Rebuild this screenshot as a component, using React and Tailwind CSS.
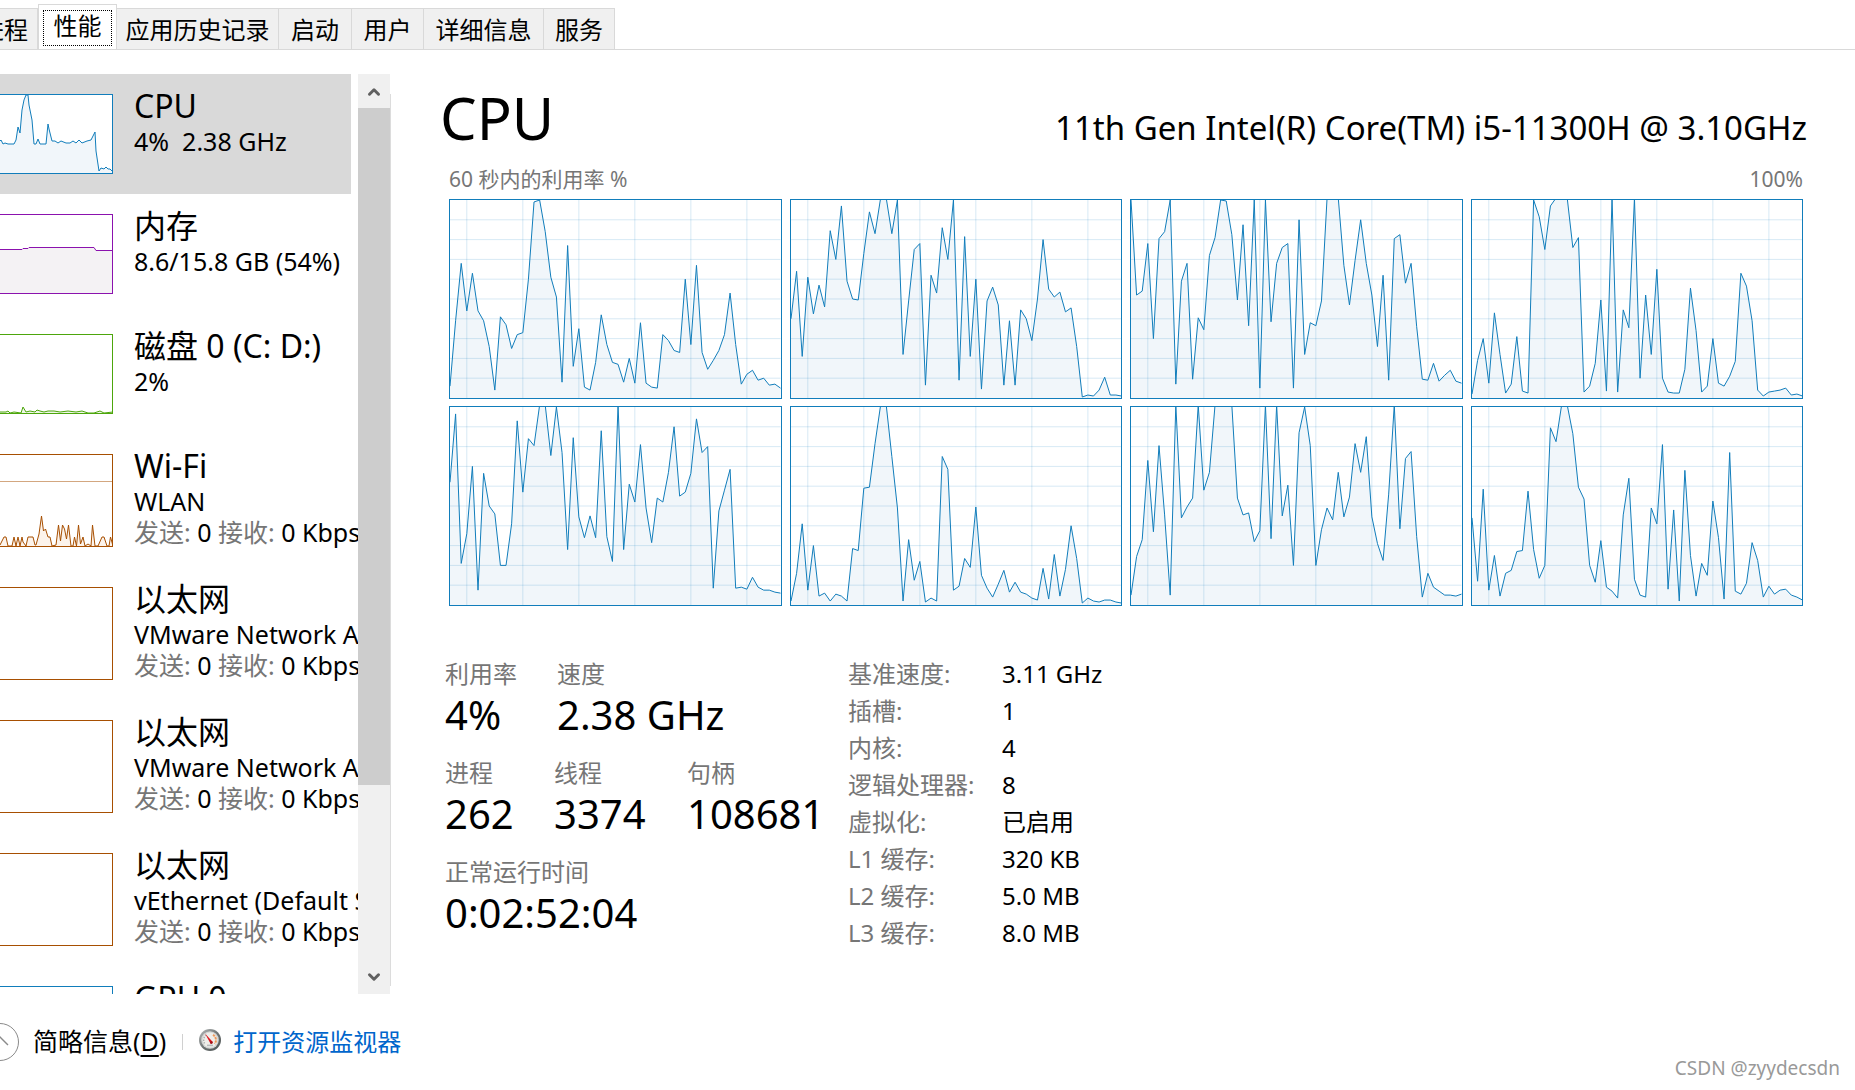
import { ChevronDown, ChevronUp } from 'lucide-react'

const TABS = [
  { label: '进程', className: 'w-[38px] pr-[9px] justify-end' },
  { label: '性能', active: true },
  { label: '应用历史记录', className: 'w-[162px] justify-center' },
  { label: '启动', className: 'w-[73px] justify-center' },
  { label: '用户', className: 'w-[72px] justify-center' },
  { label: '详细信息', className: 'w-[120px] justify-center' },
  { label: '服务', className: 'w-[71px] justify-center' },
]

const RESOURCES = [
  {
    id: 'cpu',
    title: 'CPU',
    detail: '4%  2.38 GHz',
    selected: true,
    box: 'h-[80px] border-[#117dbb]',
    stroke: '#117dbb',
    fill: '#f1f6fa',
    line: '0,46 1,45 3,49 5,48 8,49 14,49 16,45 18,32 20,38 22,15 24,5 26,0 28,0 29,10 32,25 34,49 36,49 38,44 40,49 46,49 48,29 49,34 52,46 55,46 58,48 61,46 66,48 70,48 73,46 76,48 79,45 82,48 87,46 91,45 93,41 95,37 96,56 99,76 101,73 104,74 106,72 108,74 110,74 113,77',
  },
  {
    id: 'memory',
    title: '内存',
    detail: '8.6/15.8 GB (54%)',
    box: 'h-[80px] border-[#8b12ae]',
    stroke: '#8b12ae',
    fill: '#f4f2f4',
    line: '0,34.5 22,34.5 23,33.5 28,33.5 29,32.5 94,32.5 96,35.5 113,35.5',
  },
  {
    id: 'disk',
    title: '磁盘 0 (C: D:)',
    detail: '2%',
    box: 'h-[80px] border-[#4da60c]',
    stroke: '#4da60c',
    fill: '#eff7e9',
    line: '0,77 6,77 8,76 10,78 14,77 21,78 23,72 26,77 30,76 35,77 37,75 40,76 44,77 48,76 54,76 60,77 68,76 76,77 82,76 88,78 94,78 100,76 104,78 113,77',
  },
  {
    id: 'wifi',
    title: 'Wi-Fi',
    detail: 'WLAN',
    net: true,
    cap: 26.5,
    box: 'h-[93px] border-[#a74f01]',
    stroke: '#a74f01',
    fill: '#fcf3eb',
    line: '0,90 4,82 6,82 8,91 12,91 14,82 16,91 18,82 20,91 22,82 23,87 26,91 28,82 33,82 35,90 36,90 39,79 41.5,61 43.5,76 45.5,74 48,82 50,82 52,91 56,90 57,82 58.5,70 60.5,86 62.5,70 64.5,74 66.5,84 68.5,70 71,91 73,91 74.5,82 76.5,91 78.5,70 80.5,89 83,82 85,91 88,89 91,91 92.5,70 95,91 98,91 102,82 104,82 107,91 109,91 110.5,82 113,91',
  },
  { id: 'eth0', title: '以太网', detail: 'VMware Network Ad', net: true, box: 'h-[93px] border-[#a74f01]' },
  { id: 'eth1', title: '以太网', detail: 'VMware Network Ad', net: true, box: 'h-[93px] border-[#a74f01]' },
  { id: 'eth2', title: '以太网', detail: 'vEthernet (Default Sw', net: true, box: 'h-[93px] border-[#a74f01]' },
  { id: 'gpu', title: 'GPU 0', detail: '', box: 'h-[80px] border-[#117dbb]' },
]

// one sample per second, in percent
const CORES = [
  [6, 39, 68, 44, 63, 44, 39, 26, 4, 41, 37, 25, 32, 33, 60, 99, 100, 84, 61, 51, 8, 77, 16, 35, 5.5, 4, 18, 42, 27, 18, 17, 8, 20, 7.5, 38, 7.5, 5.5, 5, 32, 29, 24, 23, 60, 27, 67, 23, 14.5, 19, 24, 32, 53, 27, 7, 12, 14, 9, 10, 6.5, 7, 5],
  [40, 64, 21, 61, 42.5, 57, 46, 84.5, 70, 97, 59, 50, 49.5, 73, 94, 83, 101, 101, 83, 100, 22, 49, 75, 78, 6.5, 62, 53, 86, 70, 100, 9, 81.5, 21, 60, 4.5, 49, 56, 47, 6.5, 39, 6.5, 44.5, 40, 29, 50, 80, 55, 51, 53.5, 43.5, 45.5, 26, 0.5, 1.5, 1, 4, 10.5, 1.5, 1.5, 1],
  [100, 52, 54, 78, 30, 80.5, 84, 100, 7, 59, 68, 9.5, 40.5, 34.5, 72, 81, 100, 99.5, 82.5, 49.5, 87.5, 36.5, 100, 5, 100, 38.5, 68, 76, 78, 5, 90, 22, 38, 36.5, 49, 101, 102, 101, 67, 47, 69.5, 90, 68, 52, 26, 62, 9, 80.5, 82.5, 58, 68, 36, 9.5, 9, 17.5, 8.5, 11.5, 14, 8.5, 7.5],
  [2, 19, 30, 7.5, 43, 22, 2.5, 7, 31, 3.5, 2.5, 100, 91.5, 75, 97, 101, 102, 101, 76, 81, 3, 6, 17.5, 49.5, 3.5, 101, 3, 44.5, 35.5, 101, 10, 52, 22, 65, 10, 3, 2.5, 2.5, 14.5, 55.5, 34, 3, 6, 30, 7.5, 6, 11, 18.5, 63, 56.5, 39, 4, 1, 3, 3.5, 4, 5, 1.5, 2, 1],
  [62, 96.5, 21, 36, 70, 7.5, 66.5, 50, 46, 20, 20, 41, 93, 57, 84, 80.5, 101, 101, 75.5, 100, 77, 28, 84.5, 44.5, 34, 45, 34, 88, 34.5, 22, 101, 28, 61, 52, 81, 49, 31.5, 54, 52, 67, 90, 55, 57, 66.5, 94, 77, 80, 8.5, 47.5, 58, 68.5, 8.5, 9, 8, 14, 9, 7.5, 7.5, 6.5, 6],
  [2, 16, 41, 7.5, 30, 4.5, 6, 2, 5.5, 4.5, 2, 28.5, 27.5, 59, 59.5, 81.5, 101, 101, 75, 49, 2, 33, 12.5, 22, 1.5, 3.5, 2, 75, 68.5, 7.5, 9.5, 23.5, 19, 49.5, 15, 8.5, 4, 10.5, 17.5, 6.5, 11.5, 6.5, 5.5, 3.5, 2.5, 18.5, 3, 25.5, 4.5, 18, 40, 23.5, 1, 3.5, 2, 1.5, 2.5, 2.5, 1.5, 1],
  [5, 24.5, 33, 73, 37, 80.5, 45.5, 5, 101, 44, 49.5, 54, 101, 58, 67, 101, 102, 102, 101, 54, 45.5, 46.5, 32, 37.5, 101, 33.5, 101, 45, 60.5, 20, 87, 100, 80.5, 20, 38, 49, 43, 67, 44.5, 54.5, 81.5, 67, 85, 44.5, 31, 22.5, 56, 101, 38.5, 74, 77.5, 34.5, 4, 16, 9, 7, 5, 5, 4.5, 5.5],
  [44, 12, 58.5, 7.5, 25, 4.5, 16, 17.5, 27, 27.5, 57.5, 28, 13.5, 20, 89.5, 82.5, 101, 101, 86.5, 59.5, 53.5, 20, 11.5, 32.5, 9, 7, 3.5, 45.5, 64, 13, 5, 4, 49, 41, 81, 8, 48, 2, 68, 25, 4.5, 21, 15, 52.5, 34, 3, 77, 7, 5.5, 11, 31.5, 22.5, 4, 9.5, 5.5, 7.5, 8, 5, 4, 2.5],
]

const SPECS = [
  ['基准速度:', '3.11 GHz'],
  ['插槽:', '1'],
  ['内核:', '4'],
  ['逻辑处理器:', '8'],
  ['虚拟化:', '已启用'],
  ['L1 缓存:', '320 KB'],
  ['L2 缓存:', '5.0 MB'],
  ['L3 缓存:', '8.0 MB'],
]

function Tabs() {
  return (
    <div className="flex h-[50px] shrink-0 items-end overflow-hidden border-b border-[#d9d9d9]" role="tablist">
      {TABS.map((tab) =>
        tab.active ? (
          <button
            key={tab.label}
            role="tab"
            aria-selected="true"
            className="-mb-px h-[46px] w-[79px] shrink-0 border border-b-0 border-[#d9d9d9] bg-white px-1 pt-[5px] pb-1 text-2xl"
          >
            <span className="flex h-9 items-center justify-center border border-dotted border-black pb-1">
              {tab.label}
            </span>
          </button>
        ) : (
          <button
            key={tab.label}
            role="tab"
            aria-selected="false"
            className={`flex h-[41px] shrink-0 items-center overflow-hidden border-t border-r border-[#d9d9d9] bg-[#f0f0f0] pt-[2px] text-2xl whitespace-nowrap ${tab.className}`}
          >
            <span className="shrink-0">{tab.label}</span>
          </button>
        )
      )}
    </div>
  )
}

function MiniChart({ item }) {
  return (
    <div className={`w-[113px] shrink-0 overflow-hidden border border-l-0 bg-white ${item.box}`}>
      {item.line && (
        <svg className="block h-full w-full" aria-hidden="true">
          <polygon points={`0,100 ${item.line} 113,100`} fill={item.fill} />
          {item.cap && <line x1="0" x2="113" y1={item.cap} y2={item.cap} stroke="#d3a780" />}
          <polyline points={item.line} fill="none" stroke={item.stroke} />
        </svg>
      )}
    </div>
  )
}

function ResourceItem({ item }) {
  return (
    <button
      className={`flex w-[351px] shrink-0 gap-[21px] py-5 text-left whitespace-nowrap ${item.selected ? 'bg-[#d9d9d9]' : ''}`}
    >
      <MiniChart item={item} />
      <span className="-mt-[9px] flex h-0 flex-col">
        <span className="text-[32px] leading-[41px]">{item.title}</span>
        <span className="text-[25px] leading-[31px] whitespace-pre">{item.detail}</span>
        {item.net && (
          <span className="text-[25px] leading-[31px]">
            <span className="text-[#767676]">发送:</span> 0 <span className="text-[#767676]">接收:</span> 0 Kbps
          </span>
        )}
      </span>
    </button>
  )
}

function ScrollBar() {
  return (
    <div className="flex w-[34px] shrink-0">
      <div className="flex w-8 flex-col bg-[#f0f0f0]">
        <button aria-label="向上滚动" className="flex h-[34px] items-center justify-center pt-[2px] text-[#606060]">
          <ChevronUp size={18} strokeWidth={4} />
        </button>
        <div className="flex-1">
          <div className="h-[79.5%] bg-[#cdcdcd]" />
        </div>
        <button aria-label="向下滚动" className="flex h-[34px] items-center justify-center text-[#606060]">
          <ChevronDown size={18} strokeWidth={4} />
        </button>
      </div>
      <div className="mt-5 mb-2 w-px bg-[#dcdcdc]" />
    </div>
  )
}

function CoreChart({ data }) {
  const points = data.map((v, i) => `${i},${100 - v}`).join(' ')
  return (
    <div className="h-[200px] border border-[#117dbb] bg-white">
      <svg className="block h-full w-full" viewBox="0 0 59 100" preserveAspectRatio="none" aria-hidden="true">
        <polygon points={`0,100 ${points} 59,100`} fill="#f1f6fa" />
        <g stroke="#117dbb" strokeOpacity="0.17">
          {[3, 13, 23, 33, 43, 53].map((x) => (
            <line key={x} x1={x} x2={x} y1="0" y2="100" vectorEffect="non-scaling-stroke" shapeRendering="crispEdges" />
          ))}
          {[10, 20, 30, 40, 50, 60, 70, 80, 90].map((y) => (
            <line key={y} x1="0" x2="59" y1={y} y2={y} vectorEffect="non-scaling-stroke" shapeRendering="crispEdges" />
          ))}
        </g>
        <polyline points={points} fill="none" stroke="#117dbb" vectorEffect="non-scaling-stroke" />
      </svg>
    </div>
  )
}

function Stat({ label, value, className = '' }) {
  return (
    <div className={`whitespace-nowrap ${className}`}>
      <dt className="text-2xl leading-8 text-[#767676]">{label}</dt>
      <dd className="text-[40px] leading-[50px]">{value}</dd>
    </div>
  )
}

function GaugeIcon() {
  return (
    <svg width="22" height="22" viewBox="0 0 22 22" className="-mt-1" aria-hidden="true">
      <defs>
        <linearGradient id="rim" x1="0" y1="0" x2="1" y2="1">
          <stop offset="0" stopColor="#b9bcbc" />
          <stop offset="0.5" stopColor="#6f7575" />
          <stop offset="1" stopColor="#4c5252" />
        </linearGradient>
      </defs>
      <circle cx="11" cy="11" r="11" fill="url(#rim)" />
      <circle cx="11" cy="11" r="8.8" fill="#d3d6d5" />
      <circle cx="11" cy="11" r="7.4" fill="#efeeea" />
      <path d="M5.6 14.4A6.2 6.2 0 0 1 8 5.6" fill="none" stroke="#a9adad" strokeWidth="1.4" strokeDasharray="1.4 1.2" />
      <path d="M14 5.8a6 6 0 0 1 1.6 9" fill="none" stroke="#ee9a5c" strokeWidth="2" strokeDasharray="2.4 0.8" />
      <path d="M8 16.4h6" stroke="#b8bbbb" strokeWidth="1.6" />
      <path d="M6 4.6l8 8.6-2.4 1.6z" fill="#e0141c" />
      <circle cx="12.4" cy="13.6" r="1.3" fill="#a01016" />
    </svg>
  )
}

export default function App() {
  return (
    <div className="flex h-screen flex-col overflow-hidden bg-white font-['Noto_Sans','Noto_Sans_CJK_SC',sans-serif] text-black">
      <Tabs />

      <div className="flex min-h-0 flex-1 pt-6">
        <aside className="flex shrink-0">
          <nav className="flex w-[358px] flex-col overflow-hidden">
            {RESOURCES.map((item) => (
              <ResourceItem key={item.id} item={item} />
            ))}
          </nav>
          <ScrollBar />
        </aside>

        <main className="min-w-0 flex-1 px-12 pt-1">
          <header className="flex items-baseline justify-between whitespace-nowrap">
            <h1 className="text-[58px] leading-[80px]">CPU</h1>
            <h2 className="text-[33px] leading-10">11th Gen Intel(R) Core(TM) i5-11300H @ 3.10GHz</h2>
          </header>

          <div className="pr-1 pl-[9px]">
            <div className="mt-[9px] flex justify-between text-[21px] leading-6 text-[#767676]">
              <span>60 秒内的利用率 %</span>
              <span>100%</span>
            </div>
            <div className="mt-2 grid grid-cols-4 gap-x-2 gap-y-[7px]">
              {CORES.map((data, i) => (
                <CoreChart key={i} data={data} />
              ))}
            </div>
          </div>

          <div className="mt-[49px] flex pl-[5px]">
            <div className="flex w-[403px] flex-col gap-[17px] pt-[3px]">
              <dl className="flex">
                <Stat label="利用率" value="4%" className="w-[112px]" />
                <Stat label="速度" value="2.38 GHz" />
              </dl>
              <dl className="flex">
                <Stat label="进程" value="262" className="w-[109px]" />
                <Stat label="线程" value="3374" className="w-[133px]" />
                <Stat label="句柄" value="108681" />
              </dl>
              <dl>
                <Stat label="正常运行时间" value="0:02:52:04" />
              </dl>
            </div>
            <dl className="text-2xl leading-[37px]">
              {SPECS.map(([label, value]) => (
                <div key={label} className="flex whitespace-nowrap">
                  <dt className="w-[154px] text-[#767676]">{label}</dt>
                  <dd>{value}</dd>
                </div>
              ))}
            </dl>
          </div>
        </main>
      </div>

      <footer className="flex h-24 shrink-0 items-center justify-between">
        <div className="flex items-center text-2xl">
          <button className="flex items-center gap-[13px]">
            <svg width="20" height="38" viewBox="0 0 20 38" fill="none" stroke="#8a8a8a" aria-hidden="true">
              <circle cx="0" cy="19" r="18.5" />
              <path d="M-8 22L0 14l8 8" strokeWidth="1.4" />
            </svg>
            <span className="text-[25px]">
              简略信息(<u className="underline-offset-4">D</u>)
            </span>
          </button>
          <span className="mx-4 h-4 w-px bg-[#d0d0d0]" />
          <a href="#resmon" className="flex items-center gap-3 text-[#0066cc]">
            <GaugeIcon />
            打开资源监视器
          </a>
        </div>
        <span className="mr-[15px] self-end pb-2 text-[19px] leading-7 text-[#999999]">CSDN @zyydecsdn</span>
      </footer>
    </div>
  )
}
